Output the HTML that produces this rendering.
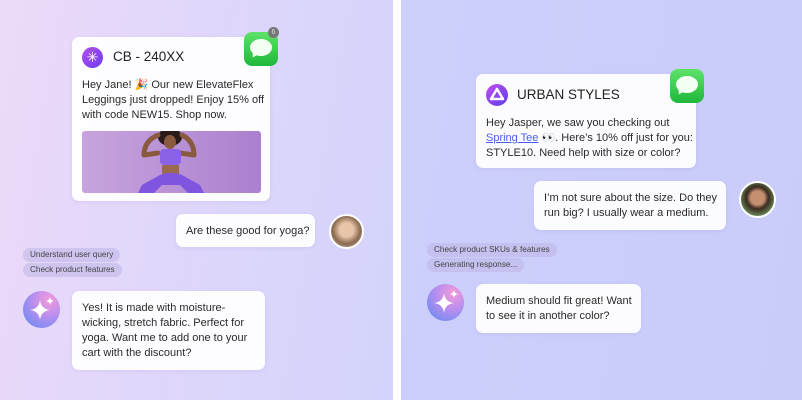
<!DOCTYPE html>
<html><head><meta charset="utf-8"><style>
*{margin:0;padding:0;box-sizing:border-box}
body{width:802px;height:400px;background:#fff;position:relative;overflow:hidden;font-family:"Liberation Sans",sans-serif;color:#222}
.p{position:absolute;top:0;height:400px}
.a{position:absolute}
.card{position:absolute;background:rgba(255,255,255,0.93);border-radius:7px;box-shadow:0 1px 4px rgba(120,100,200,0.12)}
.t{font-size:11px;line-height:15px;color:#2a2a2a;white-space:nowrap}
.chip{position:absolute;height:14px;border-radius:7px;background:rgba(190,180,230,0.55);font-size:8.2px;line-height:14px;padding:0 7px;color:#444}
.msg{position:absolute;width:34px;height:34px;border-radius:8px;background:linear-gradient(#5ee26a,#1fb83a)}
.msg:before{content:"";position:absolute;left:6px;top:7px;width:22px;height:17px;border-radius:50%;background:#f4fff4}
.msg:after{content:"";position:absolute;left:7px;top:20px;width:0;height:0;border-left:3px solid transparent;border-right:4px solid transparent;border-top:6px solid #f4fff4;transform:rotate(25deg)}
.orb{position:absolute;border-radius:50%;background:radial-gradient(circle at 70% 25%,#f39ad8,#b58ef0 45%,#7a8cf0 80%)}
.av{position:absolute;border-radius:50%;border:2px solid #fff}
</style></head><body>
<div class="p" style="left:0;width:393px;background:linear-gradient(100deg,#ecdaf9,#dcd6fb 60%,#d3d3fb)"></div>
<div class="p" style="left:401px;width:401px;background:linear-gradient(100deg,#cdd0fb,#c9cbfa)"></div>

<!-- Left card -->
<div class="card" style="left:72px;top:37px;width:198px;height:164px"></div>
<div class="a" style="left:82px;top:47px;width:21px;height:21px;border-radius:50%;background:linear-gradient(135deg,#b34df0,#6a3ff0);color:#fff;font-size:14px;line-height:21px;text-align:center">✳</div>
<div class="a" style="left:113px;top:49px;font-size:13.5px;line-height:16px;color:#222">CB - 240XX</div>
<div class="a t" style="left:82px;top:78px">Hey Jane! 🎉 Our new ElevateFlex<br>Leggings just dropped! Enjoy 15% off<br>with code NEW15. Shop now.</div>
<div class="a" style="left:82px;top:131px;width:179px;height:62px;border-radius:3px;overflow:hidden;background:linear-gradient(90deg,#c7a4dd,#ab80cf)">
<svg width="179" height="62" viewBox="0 0 179 62">
<ellipse cx="88" cy="6" rx="12" ry="9" fill="#2a1a1a"/>
<path d="M62 24 Q62 10 76 4 M112 24 Q112 10 100 4" stroke="#8a5a3e" stroke-width="5" fill="none" stroke-linecap="round"/>
<path d="M62 24 L76 22 M112 24 L98 22" stroke="#8a5a3e" stroke-width="5" stroke-linecap="round"/>
<ellipse cx="88" cy="11" rx="6" ry="7" fill="#8a5a3e"/>
<rect x="78" y="18" width="21" height="16" rx="4" fill="#8a62e6"/>
<rect x="80" y="34" width="17" height="10" fill="#9a6a4e"/>
<path d="M78 44 Q88 40 100 44 L118 54 L122 62 L106 62 L98 54 L80 54 L72 62 L56 62 L60 54 Z" fill="#7f55e0"/>
</svg></div>
<div class="msg" style="left:244px;top:32px"></div>
<div class="a" style="left:268px;top:27px;width:11px;height:11px;border-radius:50%;background:#777;color:#ddd;font-size:7px;line-height:11px;text-align:center">6</div>

<div class="card" style="left:176px;top:214px;width:139px;height:33px"></div>
<div class="a t" style="left:186px;top:224px">Are these good for yoga?</div>
<div class="av" style="left:329px;top:214px;width:35px;height:35px;background:radial-gradient(circle at 50% 45%,#e8c4a8 30%,#8a6a50 60%,#c9c2b8)"></div>

<div class="chip" style="left:23px;top:248px">Understand user query</div>
<div class="chip" style="left:23px;top:263px">Check product features</div>

<div class="orb" style="left:23px;top:291px;width:37px;height:37px"></div>
<svg class="a" style="left:23px;top:291px" width="37" height="37"><path d="M17 9 Q18 18 27 19 Q18 20 17 29 Q16 20 7 19 Q16 18 17 9Z" fill="#fff"/><path d="M27 6 Q27.5 9.5 31 10 Q27.5 10.5 27 14 Q26.5 10.5 23 10 Q26.5 9.5 27 6Z" fill="#fff"/></svg>
<div class="card" style="left:72px;top:291px;width:193px;height:79px"></div>
<div class="a t" style="left:82px;top:301px">Yes! It is made with moisture-<br>wicking, stretch fabric. Perfect for<br>yoga. Want me to add one to your<br>cart with the discount?</div>

<!-- Right -->
<div class="card" style="left:476px;top:74px;width:220px;height:94px"></div>
<div class="a" style="left:486px;top:84px;width:22px;height:22px;border-radius:50%;background:linear-gradient(135deg,#c44df0,#5a3ff0)">
<svg width="22" height="22"><path d="M11 5 L17 15 L5 15 Z" fill="none" stroke="#fff" stroke-width="2.5" stroke-linejoin="round"/></svg></div>
<div class="a" style="left:517px;top:87px;font-size:13.5px;line-height:16px;color:#222">URBAN STYLES</div>
<div class="a t" style="left:486px;top:116px">Hey Jasper, we saw you checking out<br><span style="color:#4a5cf0;text-decoration:underline">Spring Tee</span> 👀. Here’s 10% off just for you:<br>STYLE10. Need help with size or color?</div>
<div class="msg" style="left:670px;top:69px"></div>

<div class="card" style="left:534px;top:181px;width:192px;height:49px"></div>
<div class="a t" style="left:544px;top:191px">I’m not sure about the size. Do they<br>run big? I usually wear a medium.</div>
<div class="av" style="left:739px;top:181px;width:37px;height:37px;background:radial-gradient(circle at 50% 45%,#c49070 28%,#3a2a20 45%,#6a8a5a 75%)"></div>

<div class="chip" style="left:427px;top:243px">Check product SKUs &amp; features</div>
<div class="chip" style="left:427px;top:258px">Generating response...</div>

<div class="orb" style="left:427px;top:284px;width:37px;height:37px"></div>
<svg class="a" style="left:427px;top:284px" width="37" height="37"><path d="M17 9 Q18 18 27 19 Q18 20 17 29 Q16 20 7 19 Q16 18 17 9Z" fill="#fff"/><path d="M27 6 Q27.5 9.5 31 10 Q27.5 10.5 27 14 Q26.5 10.5 23 10 Q26.5 9.5 27 6Z" fill="#fff"/></svg>
<div class="card" style="left:476px;top:284px;width:165px;height:49px"></div>
<div class="a t" style="left:486px;top:294px">Medium should fit great! Want<br>to see it in another color?</div>
</body></html>
